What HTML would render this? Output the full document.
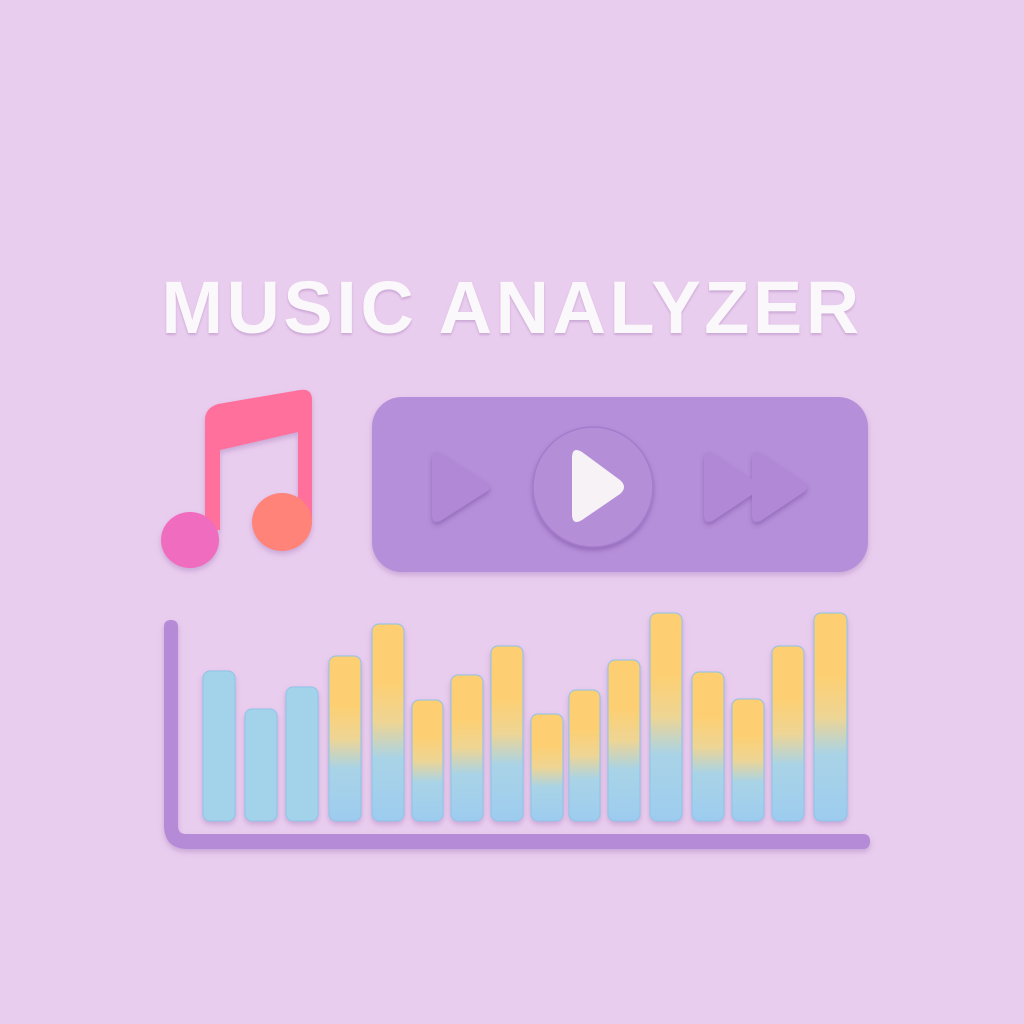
<!DOCTYPE html>
<html><head><style>
html,body{margin:0;width:1024px;height:1024px;background:#e9cdee;overflow:hidden}
.t{position:absolute;left:0;width:1024px;top:265px;text-align:center;font:bold 74px "Liberation Sans",sans-serif;color:#fbf8fb;letter-spacing:3.5px;text-shadow:0 2px 2px rgba(150,100,170,.35)}
</style></head><body>
<div class="t">MUSIC ANALYZER</div>
<svg width="1024" height="1024" style="position:absolute;left:0;top:0">
<defs>
<linearGradient id="b" x1="0" y1="0" x2="0" y2="1"><stop offset="0.3" stop-color="#fdcf72"/><stop offset="0.5" stop-color="#eed594"/><stop offset="0.68" stop-color="#a9d3e6"/><stop offset="1" stop-color="#9dccef"/></linearGradient>
<filter id="s" x="-20%" y="-20%" width="140%" height="140%"><feDropShadow dx="0" dy="3" stdDeviation="3" flood-color="#8a5fa8" flood-opacity=".35"/></filter>
<filter id="s2" x="-30%" y="-30%" width="160%" height="160%"><feDropShadow dx="0" dy="3" stdDeviation="2.5" flood-color="#6e3f98" flood-opacity=".45"/></filter>
</defs>
<g filter="url(#s)">
<path d="M205 420 Q205 408 218 404 L300 390 Q312 388 312 400 L312 520 L298 520 L298 432 L220 450 L220 530 L205 530 Z" fill="#ff6f9c"/>
<ellipse cx="190" cy="540" rx="29" ry="28" fill="#f06cbe"/>
<ellipse cx="282" cy="522" rx="30" ry="29" fill="#ff8379"/>
<rect x="372" y="397" width="496" height="175" rx="30" fill="#b58fd9"/>
<path d="M164 627 Q164 620 171 620 Q178 620 178 627 L178 826 Q178 834 186 834 L863 834 Q870 834 870 841 Q870 849 863 849 L188 849 Q164 849 164 825 Z" fill="#b58bd8"/>
</g>
<g filter="url(#s2)">
<circle cx="593" cy="487" r="60" fill="#b58ed8" stroke="#a57bcc" stroke-width="1.5"/>
<path d="M432 460 Q432 448 442 454 L486 482 Q494 487 486 492 L442 520 Q432 526 432 514 Z" fill="#b088d6"/>
<path d="M704 460 Q704 448 714 454 L756 482 Q762 487 756 492 L714 520 Q704 526 704 514 Z" fill="#b088d6"/>
<path d="M752 460 Q752 448 762 454 L804 482 Q810 487 804 492 L762 520 Q752 526 752 514 Z" fill="#b088d6"/>
<path d="M572 458 Q572 446 582 452 L620 480 Q628 487 620 494 L582 520 Q572 526 572 514 Z" fill="#f6f2f6"/>
</g>
<g filter="url(#s)" fill="url(#b)" stroke="#8cc4e8" stroke-width="1">
<rect x="203" y="671" width="32" height="150" rx="7" fill="#a3d3ea"/>
<rect x="245" y="709" width="32" height="112" rx="7" fill="#a3d3ea"/>
<rect x="286" y="687" width="32" height="134" rx="7" fill="#a3d3ea"/>
<rect x="329" y="656" width="32" height="165" rx="7"/>
<rect x="372" y="624" width="32" height="197" rx="7"/>
<rect x="412" y="700" width="31" height="121" rx="7"/>
<rect x="451" y="675" width="32" height="146" rx="7"/>
<rect x="491" y="646" width="32" height="175" rx="7"/>
<rect x="531" y="714" width="32" height="107" rx="7"/>
<rect x="569" y="690" width="31" height="131" rx="7"/>
<rect x="608" y="660" width="32" height="161" rx="7"/>
<rect x="650" y="613" width="32" height="208" rx="7"/>
<rect x="692" y="672" width="32" height="149" rx="7"/>
<rect x="732" y="699" width="32" height="122" rx="7"/>
<rect x="772" y="646" width="32" height="175" rx="7"/>
<rect x="814" y="613" width="33" height="208" rx="7"/>
</g>
</svg>
</body></html>
